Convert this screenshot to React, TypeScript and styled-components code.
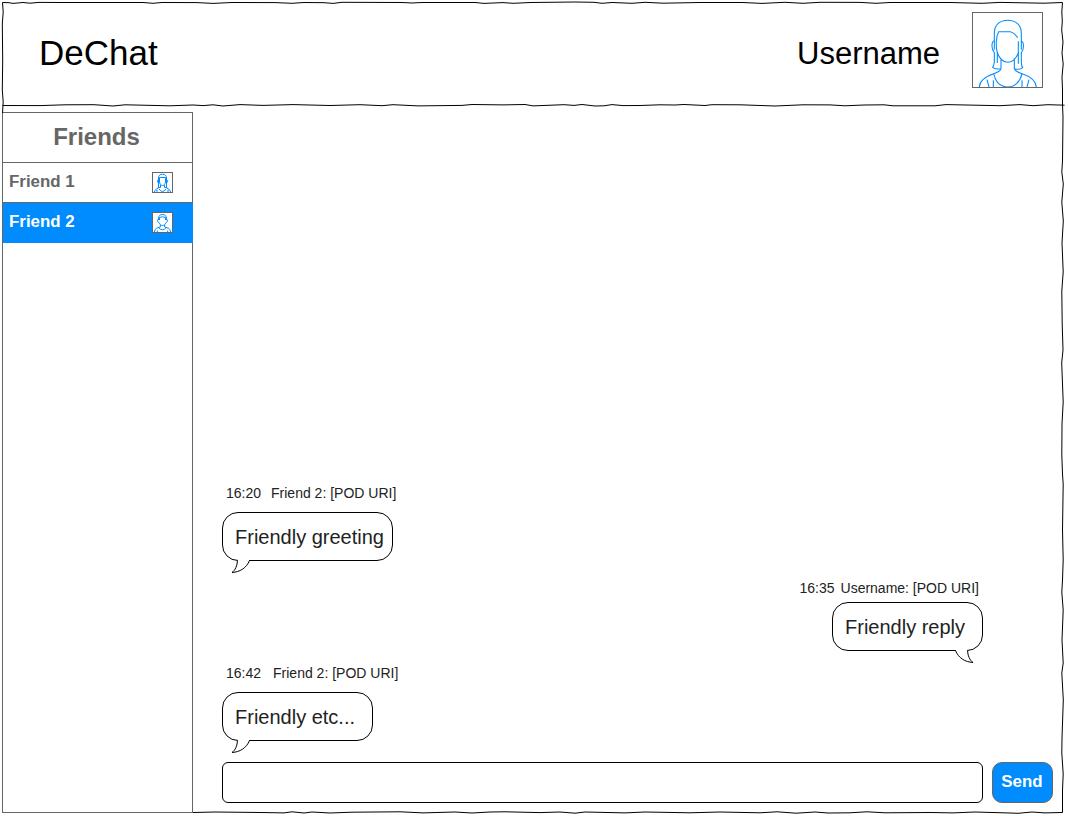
import React from 'react';
import styled, { createGlobalStyle, css } from 'styled-components';

const GlobalStyle = createGlobalStyle`
  * { box-sizing: border-box; }
  body {
    margin: 0;
    background: #fff;
    font-family: "Liberation Sans", Arial, sans-serif;
    color: #000;
  }
`;

const Window = styled.div`
  position: relative;
  display: flex;
  flex-direction: column;
  width: 1069px;
  height: 816px;
  padding: 2px 6px 3px 2px;
  overflow: hidden;
`;

const SketchFrame = styled.svg`
  position: absolute;
  inset: 0;
  pointer-events: none;
  fill: none;
  stroke: #000;
  stroke-width: 1;
`;

const Header = styled.header`
  display: flex;
  align-items: flex-start;
  height: 110px;
  padding: 10px 20px 0 37px;
`;

const Brand = styled.h1`
  margin: 21px auto 0 0;
  font-size: 35px;
  line-height: 40px;
  font-weight: 400;
`;

const UserName = styled.span`
  margin: 24px 32px 0 0;
  font-size: 31px;
  line-height: 36px;
`;

const Portrait = styled.svg<{ $w: number; $h: number }>`
  display: block;
  flex: none;
  width: ${(p) => p.$w}px;
  height: ${(p) => p.$h}px;
  background: #fff;
  border: 1px solid #666;
  fill: none;
  stroke: #008cff;
`;

const Body = styled.div`
  display: flex;
  flex: 1;
  min-height: 0;
`;

const Sidebar = styled.aside`
  width: 191px;
  border: 1px solid #666;
  color: #666;
  font-weight: 700;
`;

const SidebarTitle = styled.h2`
  margin: 0;
  height: 50px;
  padding-right: 2px;
  border-bottom: 1px solid #666;
  font-size: 24px;
  line-height: 48px;
  text-align: center;
`;

const FriendRow = styled.div<{ $active?: boolean }>`
  display: flex;
  justify-content: space-between;
  align-items: flex-start;
  height: 40px;
  padding: 9px 19px 0 6px;
  border-bottom: 1px solid #666;
  font-size: 16.9px;
  line-height: 19px;
  ${(p) =>
    p.$active &&
    css`
      margin-right: -1px;
      padding-right: 20px;
      border-bottom-color: #008cff;
      background: #008cff;
      color: #fff;
    `}
`;

const Chat = styled.main`
  display: flex;
  flex-direction: column;
  justify-content: flex-end;
  flex: 1;
  padding: 0 10px 10px 29px;
`;

const Message = styled.section<{ $mine?: boolean; $gap: number }>`
  display: flex;
  flex-direction: column;
  align-items: ${(p) => (p.$mine ? 'flex-end' : 'flex-start')};
  margin: 0 ${(p) => (p.$mine ? 70 : 0)}px ${(p) => p.$gap}px 0;
`;

const Meta = styled.div<{ $mine?: boolean; $space: number; $drop: number }>`
  display: flex;
  gap: ${(p) => p.$space}px;
  margin: 0 ${(p) => (p.$mine ? 4 : 0)}px ${(p) => p.$drop}px ${(p) => (p.$mine ? 0 : 4)}px;
  font-size: 14px;
  line-height: 16px;
  color: #222;
`;

const Bubble = styled.div<{ $width: number }>`
  position: relative;
  width: ${(p) => p.$width}px;
  height: 49px;
  padding-left: 12px;
  border: 1px solid #000;
  border-radius: 16px;
  background: #fff;
  color: #222;
  font-size: 20px;
  line-height: 48px;
  white-space: nowrap;
`;

const Tail = styled.svg<{ $mine?: boolean }>`
  position: absolute;
  top: 47px;
  ${(p) => (p.$mine ? 'right: 7px; transform: scaleX(-1);' : 'left: 7px;')}
  fill: #fff;
  stroke: #000;
`;

const Composer = styled.form`
  display: flex;
  gap: 9px;
  height: 41px;
`;

const MessageInput = styled.input`
  flex: 1;
  min-width: 0;
  border: 1px solid #000;
  border-radius: 6px;
  background: #fff;
  outline: 0;
`;

const SendButton = styled.button`
  width: 61px;
  padding: 0 1px 1px 0;
  border: 1px solid #666;
  border-radius: 10px;
  background: #008cff;
  color: #fff;
  font: 700 16.9px/20px "Liberation Sans", Arial, sans-serif;
`;

const WomanPortrait = () => (
  <Portrait $w={71} $h={76} viewBox="39 40 207 222" preserveAspectRatio="none" strokeWidth={3.2}>
    <path d="M112 190V158Q108 148 109 126Q109 108 116 96H151Q164 100 173 114M175 125V192M103 150V101C103 76 119 62 143 62S184 76 184 101V150" />
    <path d="M103 123C94 124 93 149 103 159V187Q102 197 98 203Q105 210 122 207M184 124C193 128 192 150 184 159V187Q184 199 188 204Q179 212 163 207" />
    <path d="M111 157C118 176 130 188 143 188S168 177 175 160M123 176V207Q121 216 101 222C75 231 59 242 58 262M163 176V207Q167 216 186 222C211 230 227 243 229 262" />
    <path d="M101 222C107 248 122 262 143 262S181 246 186 222M81 240L87 262M100 242V262M186 242V262M207 240L201 262" />
  </Portrait>
);

const SmallWomanPortrait = () => (
  <Portrait $w={21} $h={21} viewBox="1 1 19 19" strokeWidth={1}>
    <path d="M6.5 16V6C6.5 3.5 8 2.2 10.5 2.2S14.5 3.5 14.5 6V16M7.5 5.5H13.5M5.7 8V10.5M15.3 8V10.5" />
    <path d="M7.5 5.5V10C7.8 12 9 13.5 10.5 13.5S13.2 12 13.5 10V5.5M5.8 15.5H8.5V13M15.2 15.5H12.5V13" />
    <path d="M6.5 16Q3 17 2.3 20M14.5 16Q18 17 18.7 20M7 17Q10.5 22 14 17M5 18V20M16 18V20" />
  </Portrait>
);

const ManPortrait = () => (
  <Portrait $w={21} $h={21} viewBox="1 1 19 19" strokeWidth={1}>
    <path d="M6.5 8V6.5C6.5 3.8 8 2.5 10.5 2.5S14.5 3.8 14.5 6.5V8M7.5 8V5.5Q10.5 4 13.5 5.5V8" />
    <path d="M6.5 7.2C5 7.2 5.3 10.4 7 10.6C7.8 12.5 9 13.5 10.5 13.5S13.2 12.5 14 10.6C15.7 10.4 16 7.2 14.5 7.2" />
    <path d="M8.3 13V15L4.5 16.2Q2.8 17 2.3 20M12.7 13V15L16.5 16.2Q18.2 17 18.7 20M6.7 15.6Q10.5 20 14.3 15.6M5.3 18.5V20M15.7 18.5V20" />
  </Portrait>
);

const BubbleTail = ({ mine }: { mine?: boolean }) => (
  <Tail $mine={mine} width="22" height="15" viewBox="0 0 22 15">
    <path d="M7 0H19V2H7Z" stroke="none" />
    <path d="M7.3 0C7.6 5.5 5 10.5 2 12.5C10 12 16.5 8 19.5 0.5" />
  </Tail>
);

export default function App() {
  return (
    <>
      <GlobalStyle />
      <Window>
        <Header>
          <Brand>DeChat</Brand>
          <UserName>Username</UserName>
          <WomanPortrait />
        </Header>
        <Body>
          <Sidebar>
            <SidebarTitle>Friends</SidebarTitle>
            <FriendRow>
              Friend 1
              <SmallWomanPortrait />
            </FriendRow>
            <FriendRow $active>
              Friend 2
              <ManPortrait />
            </FriendRow>
          </Sidebar>
          <Chat>
            <Message $gap={19}>
              <Meta $space={10} $drop={11}><span>16:20</span><span>Friend 2: [POD URI]</span></Meta>
              <Bubble $width={171}>Friendly greeting<BubbleTail /></Bubble>
            </Message>
            <Message $mine $gap={14}>
              <Meta $mine $space={6} $drop={6}><span>16:35</span><span>Username: [POD URI]</span></Meta>
              <Bubble $width={151}>Friendly reply<BubbleTail mine /></Bubble>
            </Message>
            <Message $gap={21}>
              <Meta $space={12} $drop={11}><span>16:42</span><span>Friend 2: [POD URI]</span></Meta>
              <Bubble $width={151}>Friendly etc...<BubbleTail /></Bubble>
            </Message>
            <Composer>
              <MessageInput aria-label="Message" />
              <SendButton type="button">Send</SendButton>
            </Composer>
          </Chat>
        </Body>
        <SketchFrame width="1069" height="816" viewBox="0 0 1069 816">
          <path d="M2.5 2.5L9 2.7L13 3.4L23 2.5L30 3.2L39 2.4L60 2.5L143 2.5L153 3.3L162 2.5L197 2.6L213 3.4L232 2.5L275 2.6L292 3.3L304 2.5L324 2.7L333 3.4L342 2.3L402 2.5L412 3L422 2.5L475 2.5L484 3.4L503 2.6L513 3.3L531 2.5L575 2L594 2.3L602 3.3L612 2.5L632 3.3L645 2.3L663 3.2L700 2.5L742 2.5L762 3.4L785 2.3L803 3.3L820 2.3L860 2.4L876 3.3L890 2.5L930 2.5L950 2.5L982 3.3L1000 2.4L1044 3.2L1062.5 2.5" />
          <path d="M2.5 105.5L40 105.6L65 104.8L94 104.7L113 106L125 104.8L170 105.8L193 105L203 105.6L213 104.8L223 106L240 104.6L263 105.4L293 104.6L330 105.5L360 104.7L382 105.7L393 104.7L418 105.9L462 105.4L472 104.5L503 104.9L525 104.5L533 105.9L564 104.7L574 105.4L582 104.5L595 106L604 105.8L612 104.6L623 105.6L640 105.5L660 104.8L675 105L684 104.5L705 105.5L712 104.7L740 104.8L775 106L803 104.8L830 104.9L845 105.8L864 105L884 104.8L893 105.8L935 105.8L946 104.6L1000 105.7L1020 104.6L1033 105.7L1048 104.7L1064.5 105.2" />
          <path d="M2.5 2.5L3.2 12L2.3 24L2.7 60L2.3 90L3.2 102L2.5 113" />
          <path d="M1062.5 2.5L1061.8 12L1062.3 21L1061.7 30L1063 42L1062 53L1063.2 64L1062 77L1062.5 90V105L1063 117L1062.5 161L1061.8 172L1063.3 184L1061.8 202L1063.3 221L1062 243L1062.5 255L1063.2 272L1061.8 291L1062.2 324L1063 350L1061.7 363L1063.2 402L1062 424L1061.8 455L1062.5 474L1063.2 484L1062.5 530L1063.2 560L1062.5 580L1061.8 592L1063.2 610L1062 640L1063.2 663L1061.8 673L1063.3 700L1062 738L1061.8 753L1063.2 774L1062.5 790V812.5" />
          <path d="M193 812.5L215 812L260 812.5L284 812.9L292 811.8L304 813L312 812L330 813L352 812.2L400 811.8L423 812.9L455 812L472 813L490 812L505 811.8L540 812.6L560 812L575 813.2L585 812L625 812.9L645 812L690 812.8L720 812L760 812.8L777 811.8L796 813.2L815 812L828 813L850 812.8L867 811.8L885 812.8L930 812.5L953 812.9L975 812L1010 813L1018 813.3L1032 812L1045 812.9L1062.5 812.5" />
        </SketchFrame>
      </Window>
    </>
  );
}
